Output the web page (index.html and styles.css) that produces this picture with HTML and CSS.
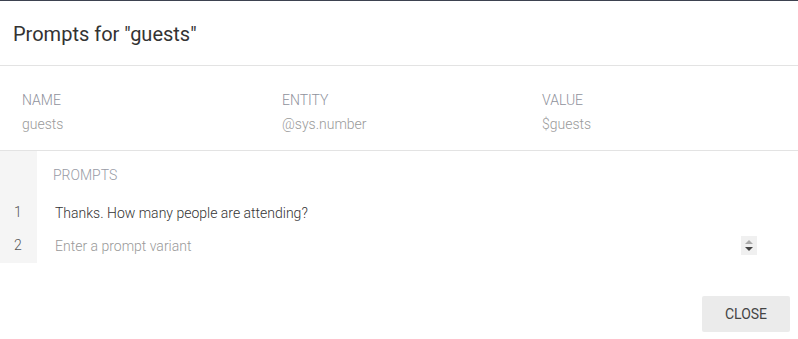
FILE: index.html
```html
<!DOCTYPE html>
<html lang="en">
<head>
    <meta charset="UTF-8">
    <meta name="viewport" content="width=device-width, initial-scale=1.0">
    <title>Prompts for "guests"</title>
    <link rel="stylesheet" href="styles.css">
</head>
<body>
    <div class="backdrop"></div>

    <div class="dialog">
        <h1 class="dialog-title">Prompts for "guests"</h1>

        <!-- Parameter -->
        <div class="param">
            <div class="param-col">
                <div class="param-label">NAME</div>
                <div class="param-value">guests</div>
            </div>
            <div class="param-col">
                <div class="param-label">ENTITY</div>
                <div class="param-value">@sys.number</div>
            </div>
            <div class="param-col">
                <div class="param-label">VALUE</div>
                <div class="param-value">$guests</div>
            </div>
        </div>

        <!-- Prompts -->
        <div class="prompts">
            <div class="gutter">
                <div class="gutter-head"></div>
                <div class="num">1</div>
                <div class="num">2</div>
            </div>
            <div class="prompt-list">
                <div class="prompts-label">PROMPTS</div>
                <div class="prompt-row">
                    <span class="prompt-text">Thanks. How many people are attending?</span>
                </div>
                <div class="prompt-row">
                    <span class="prompt-text placeholder">Enter a prompt variant</span>
                    <span class="spinner">
                        <span class="arrow-up"></span>
                        <span class="arrow-down"></span>
                    </span>
                </div>
            </div>
        </div>

        <div class="dialog-actions">
            <button class="button">CLOSE</button>
        </div>
    </div>
</body>
</html>
```

FILE: styles.css
```css
body {
    margin: 0;
    font-family: Roboto, "Liberation Sans", Arial, sans-serif;
    background-color: #fff;
}

.backdrop {
    height: 1px;
    background-color: #3d4250;
}

.dialog-title {
    margin: 0;
    padding: 21px 13px 19px;
    font-size: 20px;
    font-weight: normal;
    line-height: 24px;
    color: #333;
    border-bottom: 1px solid #e3e3e3;
}

.param {
    display: flex;
    padding: 24px 0 16px 22px;
    border-bottom: 1px solid #e3e3e3;
}
.param-col {
    flex: 0 0 260px;
}
.param-label {
    font-size: 14px;
    font-weight: 300;
    line-height: 20px;
    color: #8f929c;
}
.param-value {
    margin-top: 4px;
    font-size: 14px;
    font-weight: 300;
    line-height: 20px;
    color: #9a9a9a;
}

.prompts {
    display: flex;
}
.gutter {
    width: 37px;
    padding-bottom: 1px;
    background-color: #f5f5f5;
}
.gutter-head {
    height: 45px;
}
.num {
    height: 33px;
    line-height: 33px;
    padding-left: 14px;
    font-size: 14px;
    font-weight: 300;
    color: #555;
}

.prompt-list {
    flex: 1;
    padding-right: 41px;
}
.prompts-label {
    padding: 14px 0 11px 16px;
    font-size: 14px;
    font-weight: 300;
    line-height: 20px;
    color: #989ba5;
}
.prompt-row {
    display: flex;
    align-items: center;
    height: 33px;
    padding-left: 18px;
}
.prompt-text {
    font-size: 14px;
    font-weight: 300;
    color: #333;
}
.prompt-text.placeholder {
    color: #999;
}

.spinner {
    display: flex;
    flex-direction: column;
    align-items: center;
    justify-content: center;
    gap: 3px;
    margin-left: auto;
    width: 16px;
    height: 19px;
    background-color: #f0f0f0;
}
.arrow-up {
    border-left: 4px solid transparent;
    border-right: 4px solid transparent;
    border-bottom: 4px solid #aaa;
}
.arrow-down {
    border-left: 4px solid transparent;
    border-right: 4px solid transparent;
    border-top: 4px solid #444;
}

.dialog-actions {
    display: flex;
    justify-content: flex-end;
    padding: 33px 8px 0;
}
.button {
    width: 88px;
    height: 36px;
    font-family: inherit;
    font-size: 14px;
    color: #444;
    background-color: #ebebeb;
    border: none;
    border-radius: 2px;
}
```
